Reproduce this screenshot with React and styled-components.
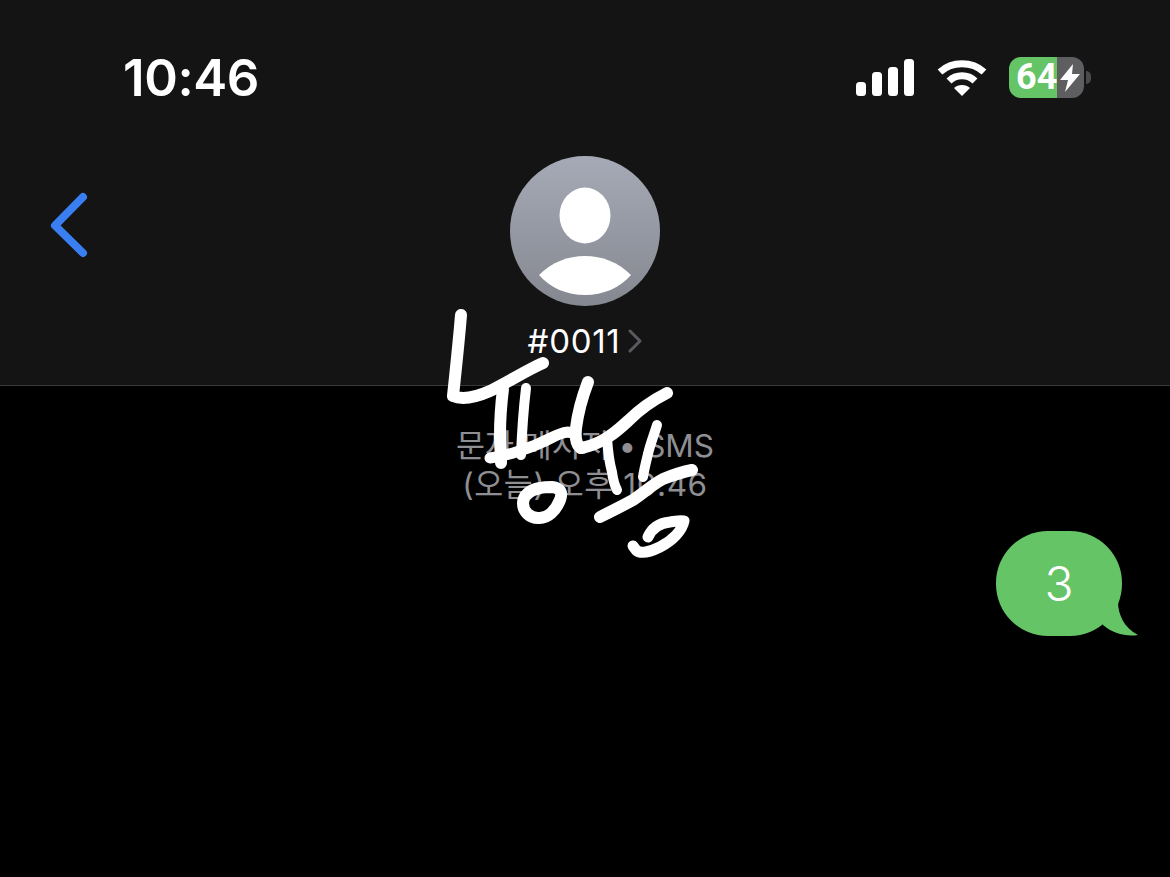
import React from "react";
import styled, { createGlobalStyle } from "styled-components";

const Global = createGlobalStyle`
  html, body {
    margin: 0;
    padding: 0;
    background: #000;
  }
`;

const Screen = styled.div`
  position: relative;
  width: 1170px;
  height: 877px;
  overflow: hidden;
  background: #000;
  font-family: "Inter", "Liberation Sans", "Noto Sans CJK KR", sans-serif;
`;

const Header = styled.header`
  box-sizing: border-box;
  height: 386px;
  background: #141415;
  border-bottom: 1px solid #38383a;
  display: flex;
  flex-direction: column;
`;

const StatusBar = styled.div`
  box-sizing: border-box;
  height: 156px;
  padding: 50px 79px 0 123px;
  display: flex;
  justify-content: space-between;
  align-items: flex-start;
`;

const Time = styled.div`
  color: #fff;
  font-size: 51px;
  line-height: 56px;
  font-weight: 600;
  letter-spacing: -0.4px;
`;

const StatusIcons = styled.div`
  display: flex;
  align-items: center;
  gap: 23px;
  padding-top: 7px;
`;

const Battery = styled.div`
  display: flex;
  align-items: center;
  gap: 2px;
  margin-left: -1px;
`;

const BatteryBody = styled.div`
  position: relative;
  width: 75px;
  height: 41px;
  border-radius: 12px;
  overflow: hidden;
  background: linear-gradient(to right, #65c466 64%, #5e5e60 64%);
  color: #fff;
  font-size: 36px;
  line-height: 41px;
  font-weight: 700;
  font-family: "Roboto", "Liberation Sans", sans-serif;
  padding-left: 7px;
  box-sizing: border-box;
`;

const Bolt = styled.svg`
  position: absolute;
  right: 4px;
  top: 7px;
`;

const BatteryCap = styled.div`
  width: 5px;
  height: 13px;
  border-radius: 0 5px 5px 0;
  background: #4a4a4c;
`;

const NavRow = styled.div`
  position: relative;
  display: flex;
  flex-direction: column;
  align-items: center;
`;

const BackButton = styled.svg`
  position: absolute;
  left: 47px;
  top: 34px;
`;

const ContactName = styled.div`
  display: flex;
  align-items: center;
  gap: 8px;
  margin-top: 16px;
  color: #fff;
  font-size: 33px;
  line-height: 38px;
  letter-spacing: 0.7px;
`;

const Thread = styled.main`
  display: flex;
  flex-direction: column;
  padding-top: 40px;
`;

const Meta = styled.div`
  color: #8e8e93;
  text-align: center;
  font-size: 31.5px;
  line-height: 39px;
`;

const MetaLine = styled.div`
  letter-spacing: ${(props) => props.$spread || 0}px;
`;

const BubbleRow = styled.div`
  display: flex;
  justify-content: flex-end;
  padding: 27px 48px 0 0;
`;

const Bubble = styled.div`
  position: relative;
  width: 126px;
  height: 105px;
  border-radius: 52px;
  background: #65c466;
  color: #fff;
  font-size: 48px;
  font-weight: 300;
  display: flex;
  align-items: center;
  justify-content: center;
`;

const Tail = styled.svg`
  position: absolute;
  right: -16px;
  bottom: 0;
`;

const Scribble = styled.svg`
  position: absolute;
  left: 0;
  top: 0;
  pointer-events: none;
`;

// handwriting over the thread, page coordinates
const strokes = [
  { d: "M461 315 C459 340 456 368 453 396 C462 400 474 398 490 391 C510 381 527 370 543 363", w: 12 },
  { d: "M503 389 C501 405 500 420 500 435 C500 445 501 455 501 463", w: 12 },
  { d: "M526 388 C524 405 522 430 521 455", w: 10 },
  { d: "M490 458 C505 456 530 449 553 437 C565 431 570 431 574 434", w: 11 },
  { d: "M588 382 C583 395 578 412 576 428 C575 438 576 445 581 448", w: 12 },
  { d: "M667 393 C655 399 640 409 628 421 C615 433 602 444 581 448", w: 12 },
  { d: "M607 438 C608 452 610 465 612 472 C613 480 615 486 617 490", w: 10 },
  { d: "M657 425 C654 435 650 445 648 454 C646 462 644 470 643 477", w: 10 },
  { d: "M600 517 C612 511 622 506 633 500 C645 492 653 484 663 479 C673 475 682 472 692 470", w: 12 },
  { d: "M648 537 C652 528 660 523 670 522 C677 521 682 520 684 521 C682 531 672 541 660 547 C650 552 640 554 636 550 L633 546", w: 11 },
  { d: "M540 488 C530 490 523 495 523 503 C523 512 530 518 538 518 C548 519 556 510 560 500 C563 492 560 488 552 487 C548 487 544 487 540 488", w: 12 },
];

const App = () => {
  return (
    <Screen>
      <Global />
      <Header>
        <StatusBar>
          <Time>10:46</Time>
          <StatusIcons>
            <svg width="58" height="37" viewBox="0 0 58 37" fill="#fff">
              <rect x="0" y="23" width="10" height="14" rx="3.5" />
              <rect x="16" y="13" width="10" height="24" rx="3.5" />
              <rect x="32" y="8" width="10" height="29" rx="3.5" />
              <rect x="48" y="0" width="10" height="37" rx="3.5" />
            </svg>
            <svg width="50" height="38" viewBox="0 0 50 38" fill="none" stroke="#fff" strokeWidth="7">
              <path d="M3 13 C15 2 35 2 47 13" />
              <path d="M12 22 C19 15 31 15 38 22" />
              <path d="M25 37 L17 29 C21 25 29 25 33 29 Z" fill="#fff" stroke="none" />
            </svg>
            <Battery>
              <BatteryBody>
                64
                <Bolt width="20" height="28" viewBox="0 0 20 28" fill="#fff">
                  <path d="M13 0 L0 16 H8 L5 28 L20 10 H12 Z" />
                </Bolt>
              </BatteryBody>
              <BatteryCap />
            </Battery>
          </StatusIcons>
        </StatusBar>
        <NavRow>
          <BackButton width="44" height="70" viewBox="0 0 44 70" fill="none">
            <path d="M36 7 L8 35.5 L36 63" stroke="#3a7ff2" strokeWidth="8" strokeLinecap="round" strokeLinejoin="round" />
          </BackButton>
          <svg width="150" height="150" viewBox="0 0 150 150">
            <defs>
              <linearGradient id="avatar" x1="0" y1="0" x2="0" y2="1">
                <stop offset="0" stopColor="#a6aab6" />
                <stop offset="1" stopColor="#858890" />
              </linearGradient>
            </defs>
            <circle cx="75" cy="75" r="75" fill="url(#avatar)" />
            <ellipse cx="75" cy="59.5" rx="25.5" ry="28" fill="#fff" />
            <path d="M29 119 C42 106 58 100 75 100 C92 100 108 106 121 119 C110 132 93 139 75 139 C57 139 40 132 29 119 Z" fill="#fff" />
          </svg>
          <ContactName>
            #0011
            <svg width="14" height="24" viewBox="0 0 14 24" fill="none">
              <path d="M2 2 L12 12 L2 22" stroke="#5a5a5e" strokeWidth="3" strokeLinecap="round" strokeLinejoin="round" />
            </svg>
          </ContactName>
        </NavRow>
      </Header>
      <Thread>
        <Meta>
          <MetaLine>문자 메시지 • SMS</MetaLine>
          <MetaLine $spread={0.55}>(오늘) 오후 10:46</MetaLine>
        </Meta>
        <BubbleRow>
          <Bubble>
            3
            <Tail width="40" height="34" viewBox="0 0 40 34">
              <path d="M20 0 C20 12 26 26 40 33 C28 35 14 31 5 23 L5 10 Z" fill="#65c466" />
            </Tail>
          </Bubble>
        </BubbleRow>
      </Thread>
      <Scribble width="1170" height="877" viewBox="0 0 1170 877" fill="none">
        {strokes.map((s, i) => (
          <path key={i} d={s.d} stroke="#fff" strokeWidth={s.w} strokeLinecap="round" strokeLinejoin="round" />
        ))}
      </Scribble>
    </Screen>
  );
};

export default App;
